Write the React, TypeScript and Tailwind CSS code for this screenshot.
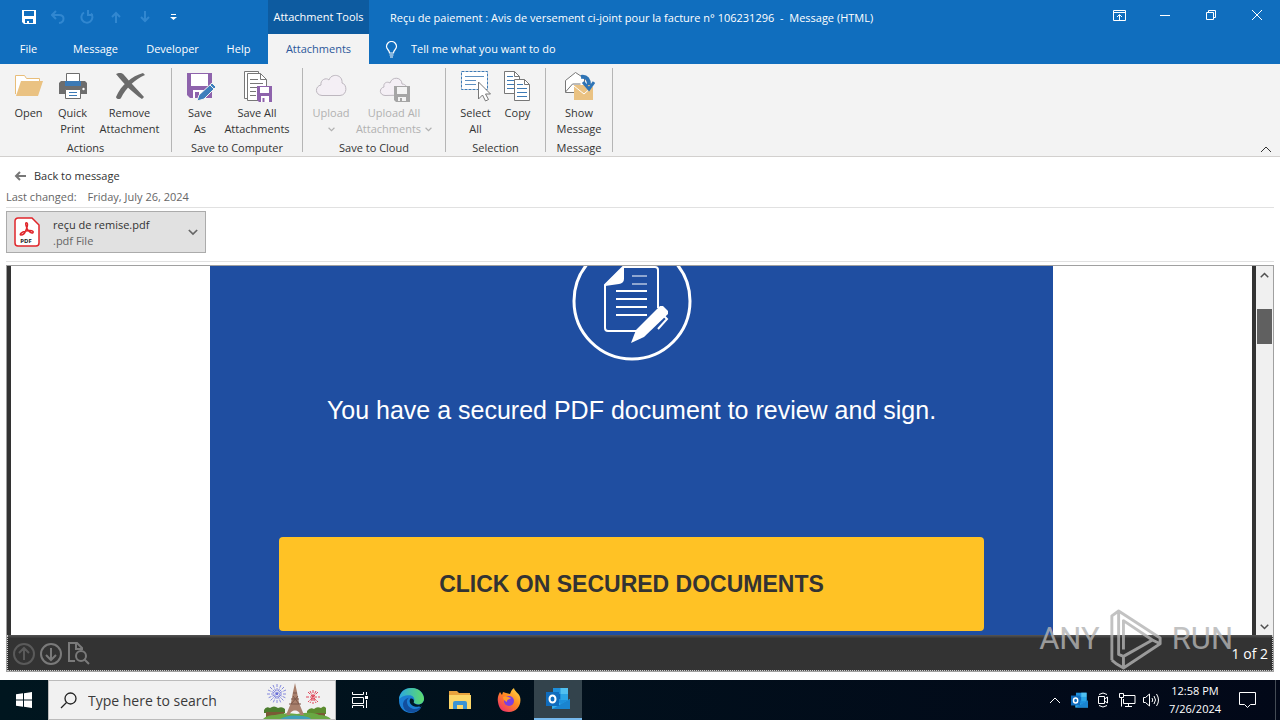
import type { ReactNode } from 'react';

/* ---------- ribbon icons (32x32) ---------- */

function FolderIcon() {
  return (
    <svg width="32" height="32" viewBox="0 0 32 32">
      <path d="M2.500 24V5.500h9l2 3h13V12" fill="#fff" stroke="#e8bd79" />
      <path d="M8 11h22l-5 15H3z" fill="#eac282" />
    </svg>
  );
}

function PrinterIcon() {
  return (
    <svg width="32" height="32" viewBox="0 0 32 32">
      <path d="M4 11h24l2 2v11H2V13z" fill="#6d6d6d" />
      <path d="M9.500 3.500h13v9h-13z" fill="#fff" stroke="#6d6d6d" />
      <path d="M8 11h16v5H8z" fill="#3d7ab5" />
      <circle cx="26.500" cy="19" r="1.200" fill="#fff" />
      <path d="M8.500 19.500h15v9h-15z" fill="#fff" stroke="#6d6d6d" />
      <path d="M12 22.500h8M12 25.500h8" stroke="#3d7ab5" />
    </svg>
  );
}

function RemoveIcon() {
  return (
    <svg width="32" height="32" viewBox="0 0 32 32" fill="#6b6b6b">
      <path d="M2 4c2-1 6-2 8 1 6 7 12 13 20 22l-2 2C19 23 11 15 2 4z" />
      <path d="M31 5C21 9 12 18 7 28c-1 2-5 1-5-1C7 15 18 6 29 3z" />
    </svg>
  );
}

function SaveAsIcon() {
  return (
    <svg width="32" height="32" viewBox="0 0 32 32">
      <path d="M3 3h25v25H6l-3-3z" fill="#8e63ac" />
      <path d="M7 4h17v12H7z" fill="#fff" />
      <path d="M9 20h12v8H9z" fill="#fff" />
      <path d="M11 22h4v6h-4z" fill="#8e63ac" />
      <path d="M13 31l2-6L28 13l4 4-12 12z" fill="#3d7fbc" stroke="#f3f3f3" />
      <path d="M26 15l4 4" stroke="#f3f3f3" />
    </svg>
  );
}

function SaveAllIcon() {
  return (
    <svg width="32" height="32" viewBox="0 0 32 32">
      <path d="M7 28.500H3.500v-27h14V4" fill="#fff" stroke="#777" />
      <path d="M6.500 30.500v-27h13l6 6v21z" fill="#fff" stroke="#777" />
      <path d="M19.500 3.500v6h6M9 9.500h8M9 13.500h13M9 17.500h7M9 21.500h6M9 25.500h6" fill="none" stroke="#777" />
      <path d="M16 16h15v16H18l-2-2z" fill="#8e63ac" />
      <path d="M19 17h9v6h-9z" fill="#fff" />
      <path d="M20 26h8v6h-8z" fill="#fff" />
      <path d="M21.500 28h2v4h-2z" fill="#8e63ac" />
    </svg>
  );
}

function CloudIcon() {
  return (
    <svg width="32" height="32" viewBox="0 0 32 32">
      <path
        d="M7 25.500C-.500 25 0 16 6 15c-1-5 5-8 8-5 2-7 14-6 13 3 5 1 6 12-2 12.500z"
        fill="#f4eff5"
        stroke="#bdb7bf"
      />
    </svg>
  );
}

function CloudSaveIcon() {
  return (
    <svg width="32" height="32" viewBox="0 0 32 32">
      <path
        d="M7 25.500C1 25 1 18 6 17c-1-4 3-6 6-4 2-7 12-6 12 1 4 0 6 4 5 6v5z"
        fill="#f4eff5"
        stroke="#bdb7bf"
      />
      <path d="M16 16h16v16H18l-2-2z" fill="#a5a5a5" />
      <path d="M19 17h10v7H19z" fill="#f3f3f3" />
      <path d="M20 27h8v4h-8z" fill="#f3f3f3" />
      <path d="M22 28h2v3h-2z" fill="#a5a5a5" />
    </svg>
  );
}

function SelectIcon() {
  return (
    <svg width="32" height="32" viewBox="0 0 32 32">
      <path d="M1.500 1.500h26v18h-26z" fill="#fff" stroke="#3d7ab5" strokeDasharray="3 1" />
      <path d="M5 6.500h19M5 10.500h11M5 14.500h11" stroke="#5d8fc0" />
      <path d="M18.500 12v17l4-4 3 6 3-1.500-3-5.500h5z" fill="#fff" stroke="#777" />
    </svg>
  );
}

function CopyIcon() {
  return (
    <svg width="32" height="32" viewBox="0 0 32 32">
      <path d="M2.500 1.500h10l5 5v17h-15z" fill="#fff" stroke="#777" />
      <path d="M12.500 1.500v5h5" fill="none" stroke="#777" />
      <path d="M5 6.500h6M5 10.500h9M5 14.500h9M5 18.500h9" stroke="#3d7ab5" />
      <path d="M12.500 9.500h10l5 5v16h-15z" fill="#fff" stroke="#777" />
      <path d="M22.500 9.500v5h5" fill="none" stroke="#777" />
      <path d="M15 14.500h6M15 18.500h10M15 22.500h10M15 26.500h10" stroke="#3d7ab5" />
    </svg>
  );
}

function ShowMessageIcon() {
  return (
    <svg width="32" height="32" viewBox="0 0 32 32">
      <path d="M2.500 22.500v-12l10-8 9 6v14z" fill="#fff" stroke="#777" />
      <path d="M2.500 22l7-8h8" fill="none" stroke="#777" />
      <path d="M11 15h19v15H11z" fill="#eac282" />
      <path d="M11 16l10 8 9-8" fill="none" stroke="#fff" />
      <path d="M18 7c6-1 8 3 8 8" fill="none" stroke="#2f74b5" strokeWidth="4" />
      <path d="M20 12l6 7 5-7" fill="none" stroke="#2f74b5" strokeWidth="3" />
    </svg>
  );
}

/* ---------- small shared glyphs ---------- */

function Chevron({ className = '', up = false }: { className?: string; up?: boolean }) {
  return (
    <svg width="12" height="8" viewBox="0 0 12 8" className={className} fill="none" stroke="currentColor">
      <path d={up ? 'M1 7l5-5 5 5' : 'M1 1l5 5 5-5'} />
    </svg>
  );
}

function OutlookIcon({ size }: { size: number }) {
  return (
    <svg width={size} height={size} viewBox="0 0 24 24">
      <path d="M7 1h15v16H7z" fill="#1d8fdc" />
      <path d="M14.500 1H22v6h-7.500z" fill="#50c0f0" />
      <path d="M7 7h7.500v5H7z" fill="#1066b5" />
      <path d="M14.500 7H22v6h-7.500z" fill="#2aa5e6" />
      <path d="M6 22V12l9 5 9-5v10z" fill="#36b1ec" />
      <path d="M6 22l18-10v10z" fill="#1a84d0" />
      <path d="M0 5h13v14H0z" fill="#0f6cbd" />
      <ellipse cx="6.500" cy="12" rx="3" ry="3.500" fill="none" stroke="#fff" strokeWidth="2" />
    </svg>
  );
}

/* ---------- title bar + tabs ---------- */

const iconBtn = 'flex h-[34px] items-center justify-center';

function TitleBar() {
  return (
    <div className="flex h-[34px] text-white">
      <div className="flex w-[268px] shrink-0 pl-[14px]">
        <button aria-label="Save" className={`${iconBtn} w-[29px]`}>
          <svg width="16" height="16" viewBox="0 0 16 16">
            <path d="M1 1h14v14H3l-2-2z" fill="#fff" />
            <path d="M3 2h10v5H3zM4 10h8v4H4z" fill="#106ebe" />
            <path d="M6 12h2v3H6z" fill="#fff" />
          </svg>
        </button>
        <button aria-label="Undo" className={`${iconBtn} w-[29px] text-[#3187d0]`}>
          <svg width="14" height="14" viewBox="0 0 14 14" fill="none" stroke="currentColor" strokeWidth="2">
            <path d="M5 1L1 5l4 4M1 5h7c6 0 6 7 0 8" />
          </svg>
        </button>
        <button aria-label="Redo" className={`${iconBtn} w-[29px] text-[#3187d0]`}>
          <svg width="14" height="14" viewBox="0 0 14 14" fill="none" stroke="currentColor" strokeWidth="2">
            <path d="M4 2.500a5.500 5.500 0 1 0 7 1M8 0v5h5" />
          </svg>
        </button>
        <button aria-label="Previous item" className={`${iconBtn} w-[29px] text-[#3187d0]`}>
          <svg width="10" height="12" viewBox="0 0 10 12" fill="none" stroke="currentColor" strokeWidth="2">
            <path d="M5 12V2M1 6l4-4 4 4" />
          </svg>
        </button>
        <button aria-label="Next item" className={`${iconBtn} w-[29px] text-[#3187d0]`}>
          <svg width="10" height="12" viewBox="0 0 10 12" fill="none" stroke="currentColor" strokeWidth="2">
            <path d="M5 0v10M1 6l4 4 4-4" />
          </svg>
        </button>
        <button aria-label="Customize toolbar" className={`${iconBtn} w-[29px]`}>
          <svg width="7" height="6" viewBox="0 0 7 6" fill="#fff">
            <path d="M1 0h5v1H1zM0 3h7L3.500 6z" />
          </svg>
        </button>
      </div>
      <div className="flex w-[101px] shrink-0 items-center justify-center bg-[#0d5ba0] text-[11px]">
        Attachment Tools
      </div>
      <h1 className="flex-1 truncate pl-[21px] text-[11px] leading-9">
        Reçu de paiement : Avis de versement ci-joint pour la facture n° 106231296 &nbsp;-&nbsp; Message (HTML)
      </h1>
      <div className="flex h-[30px]">
        <button aria-label="Ribbon display options" className="flex w-[46px] items-center justify-center">
          <svg width="13" height="11" viewBox="0 0 13 11" fill="none" stroke="currentColor">
            <path d="M.5.5h12v10H.5zM.5 2.500h12M6.500 10V5M4 7l2.500-2.500L9 7" />
          </svg>
        </button>
        <button aria-label="Minimize" className="flex w-[46px] items-center justify-center">
          <svg width="10" height="1" viewBox="0 0 10 1"><path d="M0 0h10v1H0z" fill="#fff" /></svg>
        </button>
        <button aria-label="Restore" className="flex w-[46px] items-center justify-center">
          <svg width="10" height="10" viewBox="0 0 10 10" fill="none" stroke="currentColor">
            <path d="M.5 2.500h7v7h-7zM2.500 2V.5h7v7H8" />
          </svg>
        </button>
        <button aria-label="Close" className="flex w-[46px] items-center justify-center">
          <svg width="10" height="10" viewBox="0 0 10 10" stroke="currentColor">
            <path d="M0 0l10 10M10 0L0 10" />
          </svg>
        </button>
      </div>
    </div>
  );
}

function TabRow() {
  return (
    <div className="flex h-[30px] items-center text-[11px] text-white">
      <nav className="flex w-[268px] shrink-0">
        <button className="w-[57px]">File</button>
        <button className="w-[77px]">Message</button>
        <button className="w-[77px]">Developer</button>
        <button className="w-[55px]">Help</button>
      </nav>
      <button className="h-full w-[101px] shrink-0 bg-[#f3f3f3] text-[#2b579a]">Attachments</button>
      <label className="ml-4 flex flex-1 items-center gap-[13px]">
        <svg width="13" height="17" viewBox="0 0 13 17" fill="none" stroke="currentColor">
          <path d="M4.500 12c0-3-3-3.500-3-6.500a5 5 0 0 1 10 0c0 3-3 3.500-3 6.500zM4.500 14h4M5 16h3" strokeWidth="1.200" />
        </svg>
        <input
          type="text"
          aria-label="Tell me what you want to do"
          placeholder="Tell me what you want to do"
          className="w-60 bg-transparent outline-none placeholder:text-white"
        />
      </label>
    </div>
  );
}

/* ---------- ribbon ---------- */

function RibbonGroup({ label, className, children }: { label: string; className: string; children: ReactNode }) {
  return (
    <section className={`flex shrink-0 flex-col items-center ${className}`}>
      <div className="flex h-[70px]">{children}</div>
      <div className="mt-[2px] leading-4">{label}</div>
    </section>
  );
}

function RibbonButton({
  icon,
  lines,
  className,
  disabled = false,
  menu = false,
}: {
  icon: ReactNode;
  lines: string[];
  className: string;
  disabled?: boolean;
  menu?: boolean;
}) {
  return (
    <button
      disabled={disabled}
      className={`flex flex-col items-center leading-4 whitespace-nowrap disabled:text-[#b1b1b1] ${className}`}
    >
      <span className="mb-[3px]">{icon}</span>
      {lines.map((line, i) => (
        <span key={i} className="flex h-4 items-center gap-1">
          {line}
          {menu && i === lines.length - 1 && <Chevron className="h-[5px] w-[7px] stroke-2" />}
        </span>
      ))}
    </button>
  );
}

function Divider() {
  return <div className="h-[84px] w-px shrink-0 bg-[#b5b5b5]" />;
}

function Ribbon() {
  return (
    <div className="flex h-[93px] border-b border-[#d2d0ce] bg-[#f3f3f3] pt-1 text-[11px] text-[#333]">
      <RibbonGroup label="Actions" className="w-[171px] pt-[2px]">
        <RibbonButton icon={<FolderIcon />} lines={['Open']} className="w-12" />
        <RibbonButton icon={<PrinterIcon />} lines={['Quick', 'Print']} className="w-10" />
        <RibbonButton icon={<RemoveIcon />} lines={['Remove', 'Attachment']} className="w-[74px]" />
      </RibbonGroup>
      <Divider />
      <RibbonGroup label="Save to Computer" className="w-[130px] pt-[2px]">
        <RibbonButton icon={<SaveAsIcon />} lines={['Save', 'As']} className="w-10" />
        <RibbonButton icon={<SaveAllIcon />} lines={['Save All', 'Attachments']} className="w-[74px]" />
      </RibbonGroup>
      <Divider />
      <RibbonGroup label="Save to Cloud" className="w-[142px] pt-[2px]">
        <RibbonButton icon={<CloudIcon />} lines={['Upload', '']} className="w-10" disabled menu />
        <RibbonButton icon={<CloudSaveIcon />} lines={['Upload All', 'Attachments']} className="w-[86px]" disabled menu />
      </RibbonGroup>
      <Divider />
      <RibbonGroup label="Selection" className="w-[99px] pt-[2px]">
        <RibbonButton icon={<SelectIcon />} lines={['Select', 'All']} className="w-11" />
        <RibbonButton icon={<CopyIcon />} lines={['Copy']} className="w-10" />
      </RibbonGroup>
      <Divider />
      <RibbonGroup label="Message" className="w-[66px] pt-[2px]">
        <RibbonButton icon={<ShowMessageIcon />} lines={['Show', 'Message']} className="w-14" />
      </RibbonGroup>
      <Divider />
      <button aria-label="Collapse the ribbon" className="mr-2 mb-[3px] ml-auto self-end">
        <Chevron up />
      </button>
    </div>
  );
}

/* ---------- attachment strip ---------- */

function PdfIcon() {
  return (
    <svg width="26" height="30" viewBox="0 0 26 30">
      <path d="M4 1h14l7 7v18a3 3 0 0 1-3 3H4a3 3 0 0 1-3-3V4a3 3 0 0 1 3-3z" fill="#fff" stroke="#e0262b" strokeWidth="1.500" />
      <path
        d="M12 6c2-1 2 3 0 7-1 3-3 5-5 5s0-3 5-4 8 0 7 1.500-5-1-6-4-2-5-1-5.500z"
        fill="none"
        stroke="#e0262b"
        strokeWidth="1.500"
      />
      <text x="12" y="26" textAnchor="middle" fontFamily="Open Sans" fontSize="6" fontWeight="700" fill="#222">
        PDF
      </text>
    </svg>
  );
}

function AttachmentStrip() {
  return (
    <div className="mx-[6px] text-[11px]">
      <button className="mt-[11px] ml-2 flex items-center gap-2 leading-4 text-[#333]">
        <svg width="12" height="10" viewBox="0 0 12 10" fill="none" stroke="#777" strokeWidth="2">
          <path d="M12 5H2M6 1L2 5l4 4" />
        </svg>
        Back to message
      </button>
      <div className="mt-[5px] flex gap-[11px] pb-[2px] leading-4 text-[#666]">
        <span>Last changed:</span>
        <span>Friday, July 26, 2024</span>
      </div>
      <div className="border-y border-[#e1e1e1] pt-[3px] pb-2">
        <button className="flex h-[42px] w-[200px] items-center border border-[#ababab] bg-[#e1e1e1] pr-[7px] pl-[7px] text-left leading-4">
          <PdfIcon />
          <span className="ml-[13px] flex-1 pt-[2px]">
            <span className="block text-[#333]">reçu de remise.pdf</span>
            <span className="block text-[#666]">.pdf File</span>
          </span>
          <Chevron className="h-[7px] w-[10px] stroke-2 text-[#666]" />
        </button>
      </div>
    </div>
  );
}

/* ---------- document preview ---------- */

function DocumentBadge() {
  return (
    <svg width="120" height="96" viewBox="0 0 120 96" fill="none" stroke="#fff" className="shrink-0">
      <circle cx="60" cy="35" r="58" strokeWidth="3" />
      <path d="M52 1h31a3 3 0 0 1 3 3v38M72 65H36a3 3 0 0 1-3-3V19L52 0" strokeWidth="2" />
      <path d="M33 20L52 0v13a5 5 0 0 1-5 5z" fill="#fff" stroke="none" />
      <path d="M60 10h15M60 18h15" strokeWidth="1" />
      <path d="M44 25h31M44 33h31M44 41h31M44 49h31" strokeWidth="2" />
      <path d="M59 77l5-13 24-24 3 0 5 5 0 3L72 71z" fill="#fff" stroke="none" />
      <path d="M92 50l3 3-9 10" strokeWidth="2" />
    </svg>
  );
}

function Scrollbar() {
  return (
    <div className="flex w-[17px] flex-col items-center bg-[#f0f0f0] text-[#505050]">
      <Chevron up className="mt-[6px] h-[6px] w-[9px] stroke-2" />
      <div className="mt-[31px] h-[35px] w-[15px] bg-[#606060]" />
      <Chevron className="mt-auto mb-[5px] h-[6px] w-[9px] stroke-2" />
    </div>
  );
}

function Watermark() {
  return (
    <div
      aria-hidden="true"
      className="pointer-events-none absolute right-10 bottom-0 flex items-center gap-2 font-[Roboto,sans-serif] text-[31px] leading-[64px] text-[#b4b4b4] opacity-80"
    >
      <span>ANY</span>
      <svg width="56" height="64" viewBox="0 0 58 64" fill="none" stroke="currentColor" strokeWidth="3">
        <path d="M4 54V8l7-5 43 28v6L16 62l-7-4M4 54l5 4M11 3v45l5 2 30-17L16 13v30M46 33l8 4M16 50v12" strokeLinejoin="round" />
      </svg>
      <span>RUN</span>
    </div>
  );
}

function Viewer() {
  return (
    <main className="relative mx-[6px] mb-2 flex min-h-0 flex-1 flex-col border border-[#a0a0a0] font-['Liberation_Sans',Arial,sans-serif]">
      <div className="flex min-h-0 flex-1">
        <div className="flex flex-1 justify-center overflow-hidden border-r-4 border-l-4 border-[#333] bg-white">
          <article className="flex h-full w-[68%] flex-col items-center bg-[#1f4ea1]">
            <DocumentBadge />
            <p className="mt-8 text-[25px] leading-8 text-white">
              You have a secured PDF document to review and sign.
            </p>
            <button className="mt-[111px] h-[94px] w-[705px] shrink-0 rounded bg-[#ffc225] text-[23px] font-bold text-[#333]">
              CLICK ON SECURED DOCUMENTS
            </button>
          </article>
        </div>
        <Scrollbar />
      </div>
      <div className="flex h-9 shrink-0 items-center border border-t-0 border-dotted border-[#ccc] bg-linear-to-b from-[#555] to-[#333] to-10% pt-[2px] pr-1 pl-[5px] text-[#7a7a7a]">
        <button aria-label="Previous page" className="text-[#5a5a5a]">
          <svg width="22" height="22" viewBox="0 0 22 22" fill="none" stroke="currentColor" strokeWidth="2">
            <path d="M11 1a10 10 0 1 0 0 20 10 10 0 0 0 0-20zM11 17V6M6 10l5-5 5 5" />
          </svg>
        </button>
        <button aria-label="Next page" className="ml-[5px]">
          <svg width="22" height="22" viewBox="0 0 22 22" fill="none" stroke="currentColor" strokeWidth="2">
            <path d="M11 1a10 10 0 1 0 0 20 10 10 0 0 0 0-20zM11 5v11M6 12l5 5 5-5" />
          </svg>
        </button>
        <button aria-label="Find in document" className="ml-[5px]">
          <svg width="23" height="23" viewBox="0 0 23 23" fill="none" stroke="currentColor" strokeWidth="2">
            <path d="M8 19H2V1h8l5 5v2M9 1v6h6M17 17l5 5" />
            <circle cx="14" cy="14" r="5" />
          </svg>
        </button>
        <span className="ml-auto font-['Open_Sans',sans-serif] text-[14px] text-white">1 of 2</span>
      </div>
      <Watermark />
    </main>
  );
}

/* ---------- taskbar ---------- */

function ParisArt() {
  return (
    <svg width="72" height="38" viewBox="0 0 72 38" className="shrink-0">
      <path
        d="M14 3v20M4 13h20M7 6l14 14M21 6L7 20M10 4l8 18M18 4l-8 18M5 9l18 8M23 9L5 17"
        stroke="#6a70d8"
        strokeWidth="0.800"
        strokeDasharray="3 1"
      />
      <path d="M50 9v14M43 16h14M45 11l10 10M55 11L45 21M47 10l6 12M53 10l-6 12" stroke="#e0465a" strokeDasharray="3 1" />
      <path d="M1 29q2-4 6-2 4-3 8 0 4-2 7 1v4H1z" fill="#4c7d2e" />
      <path d="M44 30q3-4 7-2 3-3 7-1 3-3 5 0v6H44z" fill="#5c8c30" />
      <path d="M3 31h18v5H3zM46 32h16v4H46z" fill="#7a5a35" />
      <path d="M0 38q4-4 12-4 10-3 22-1 16-3 22 1 8 0 12 4z" fill="#69a843" />
      <path d="M17 38q9-5 22-3 8 1 9 3z" fill="#3fa0b8" />
      <path d="M32 2l2 9 2 11 5 12h-4c0-6-10-6-10 0h-4l5-12 2-11z" fill="#a9806c" />
      <path d="M28 18h8M26 23h12M30 12h4M28 23l7-8M36 23l-6-8" stroke="#7d584a" fill="none" />
    </svg>
  );
}

function EdgeIcon() {
  return (
    <svg width="25" height="25" viewBox="0 0 24 24">
      <defs>
        <linearGradient id="edge-top" x1="0" x2="1">
          <stop offset="0" stopColor="#2aa8e0" />
          <stop offset="1" stopColor="#5fdc6b" />
        </linearGradient>
      </defs>
      <path d="M0 12C0 4 5 0 12 0s12 5 12 10c0 4-3 6-6 6l3 3c-2 3-5 5-9 5C5 24 0 19 0 12z" fill="#1b7fd4" />
      <path d="M0 11C1-3 22-4 24 10c0 6-7 7-10 4 2-3 0-7-4-7C5 7 1 9 0 11z" fill="url(#edge-top)" />
      <path d="M10 9c-4 2-3 9 3 11 4 1 7-1 9-3-3 7-13 9-17 3-3-5 0-10 5-11z" fill="#124f9e" />
      <path d="M11 10c-2 3 0 7 5 8 3 0 5-1 6-1l1-1c-3 1-8 0-9-2 1-2 0-4-3-4z" fill="#001a26" />
    </svg>
  );
}

function ExplorerIcon() {
  return (
    <svg width="22" height="20" viewBox="0 0 22 20">
      <path d="M0 1h8l2 2h11v16H0z" fill="#e8a33d" />
      <path d="M0 5h22v14H0z" fill="#fcd668" />
      <path d="M4 19v-6q0-2 2-2h10q2 0 2 2v6h-4v-4H8v4z" fill="#3b93d3" />
    </svg>
  );
}

function FirefoxIcon() {
  return (
    <svg width="24" height="24" viewBox="0 0 24 24">
      <defs>
        <linearGradient id="fox" x1="1" x2="0.200" y1="0" y2="1">
          <stop offset="0" stopColor="#ffe14a" />
          <stop offset="0.500" stopColor="#ff8a20" />
          <stop offset="1" stopColor="#f0306a" />
        </linearGradient>
      </defs>
      <path d="M1 14C0 9 2 6 3 4l2 3 1-3 3 1 4 1c1-2 1-4 4-6 0 3 5 5 6 9 2 7-3 15-11 15S2 20 1 14z" fill="url(#fox)" />
      <circle cx="12" cy="13" r="5" fill="#7b3fe0" />
      <path d="M6 9c3-1 5 0 8 1-2 2-4 1-4 4-2-1-4-2-4-5z" fill="#ff9a2a" />
    </svg>
  );
}

const taskBtn = 'flex h-full w-12 items-center justify-center';
const trayBtn = 'flex h-full w-6 items-center justify-center';

function Taskbar() {
  return (
    <footer className="flex h-10 shrink-0 items-center bg-linear-to-r from-[#00161f] to-[#020818] text-white">
      <button aria-label="Start" className={taskBtn}>
        <svg width="16" height="16" viewBox="0 0 16 16" fill="#fff">
          <path d="M0 2.300L7 1.300v6.200H0zM8 1.200L16 0v7.500H8zM0 8.500h7v6.200l-7-1zM8 8.500h8V16l-8-1.200z" />
        </svg>
      </button>
      <label className="flex h-full w-[288px] items-center border border-[#bbb] bg-[#f1f1f1] pl-[11px] text-[#222]">
        <svg width="17" height="17" viewBox="0 0 17 17" fill="none" stroke="currentColor" strokeWidth="1.300">
          <circle cx="10.500" cy="6.500" r="5.500" />
          <path d="M6.500 10.500L1 16" />
        </svg>
        <input
          type="text"
          aria-label="Search"
          placeholder="Type here to search"
          className="ml-[11px] min-w-0 flex-1 bg-transparent text-[14px] outline-none placeholder:text-[#3a3a3a]"
        />
        <ParisArt />
      </label>
      <button aria-label="Task view" className={taskBtn}>
        <svg width="17" height="16" viewBox="0 0 17 16" fill="none" stroke="currentColor">
          <path d="M.5 0v2.500h11V0M.5 5.500h11v6H.5zM.5 16v-2.500h11V16M14.500 0v3M14.500 8v8" />
          <path d="M13 4h3v3h-3z" fill="#fff" stroke="none" />
        </svg>
      </button>
      <div className="ml-[3px] flex h-full gap-px">
        <button aria-label="Edge" className={taskBtn}><EdgeIcon /></button>
        <button aria-label="File Explorer" className={taskBtn}><ExplorerIcon /></button>
        <button aria-label="Firefox" className={taskBtn}><FirefoxIcon /></button>
        <button aria-label="Outlook" className={`${taskBtn} border-b-2 border-[#76b9ed] bg-[#33434c]`}>
          <OutlookIcon size={24} />
        </button>
      </div>

      <div className="ml-auto flex h-full items-center">
        <button aria-label="Show hidden icons" className={trayBtn}><Chevron up /></button>
        <button aria-label="Outlook notifications" className={trayBtn}><OutlookIcon size={17} /></button>
        <button aria-label="Meet now" className={trayBtn}>
          <svg width="12" height="16" viewBox="0 0 12 16" fill="none" stroke="currentColor">
            <path d="M1.500 4.500h6v7h-6zM7.500 7l3-2v6l-3-2M2 2.500Q6-.5 10 2.500M2 13.500q4 3 8 0" />
          </svg>
        </button>
        <button aria-label="Network" className={trayBtn}>
          <svg width="17" height="15" viewBox="0 0 17 15" fill="none" stroke="currentColor">
            <path d="M5 2.500h11v8H4.500V6M.5.5h4v4h-4zM2.500 4.500v9M9.500 11v3M6 13.500h7" />
          </svg>
        </button>
        <button aria-label="Volume" className={trayBtn}>
          <svg width="17" height="14" viewBox="0 0 17 14" fill="none" stroke="currentColor">
            <path d="M.5 4.500h2l4-3.500v12l-4-3.500h-2zM9 5q1.500 2 0 4M11 3q3 4 0 8M13.500 1q4 6 0 12" />
          </svg>
        </button>
        <div className="w-16 text-center text-[11px] leading-[18px]">
          <div>12:58 PM</div>
          <div>7/26/2024</div>
        </div>
        <button aria-label="Notifications" className="mr-2 flex h-full w-10 items-center justify-center">
          <svg width="17" height="16" viewBox="0 0 17 16" fill="none" stroke="currentColor">
            <path d="M.5.5h16v12h-5l-3 3-3-3h-5z" />
          </svg>
        </button>
        <div className="h-full w-[5px] border-l border-[#444b55]" />
      </div>
    </footer>
  );
}

export default function App() {
  return (
    <div className="flex h-screen flex-col overflow-hidden bg-white font-['Open_Sans','Noto_Sans',sans-serif]">
      <header className="shrink-0 bg-[#106ebe]">
        <TitleBar />
        <TabRow />
        <Ribbon />
      </header>
      <AttachmentStrip />
      <div className="h-[3px] shrink-0" />
      <Viewer />
      <Taskbar />
    </div>
  );
}
